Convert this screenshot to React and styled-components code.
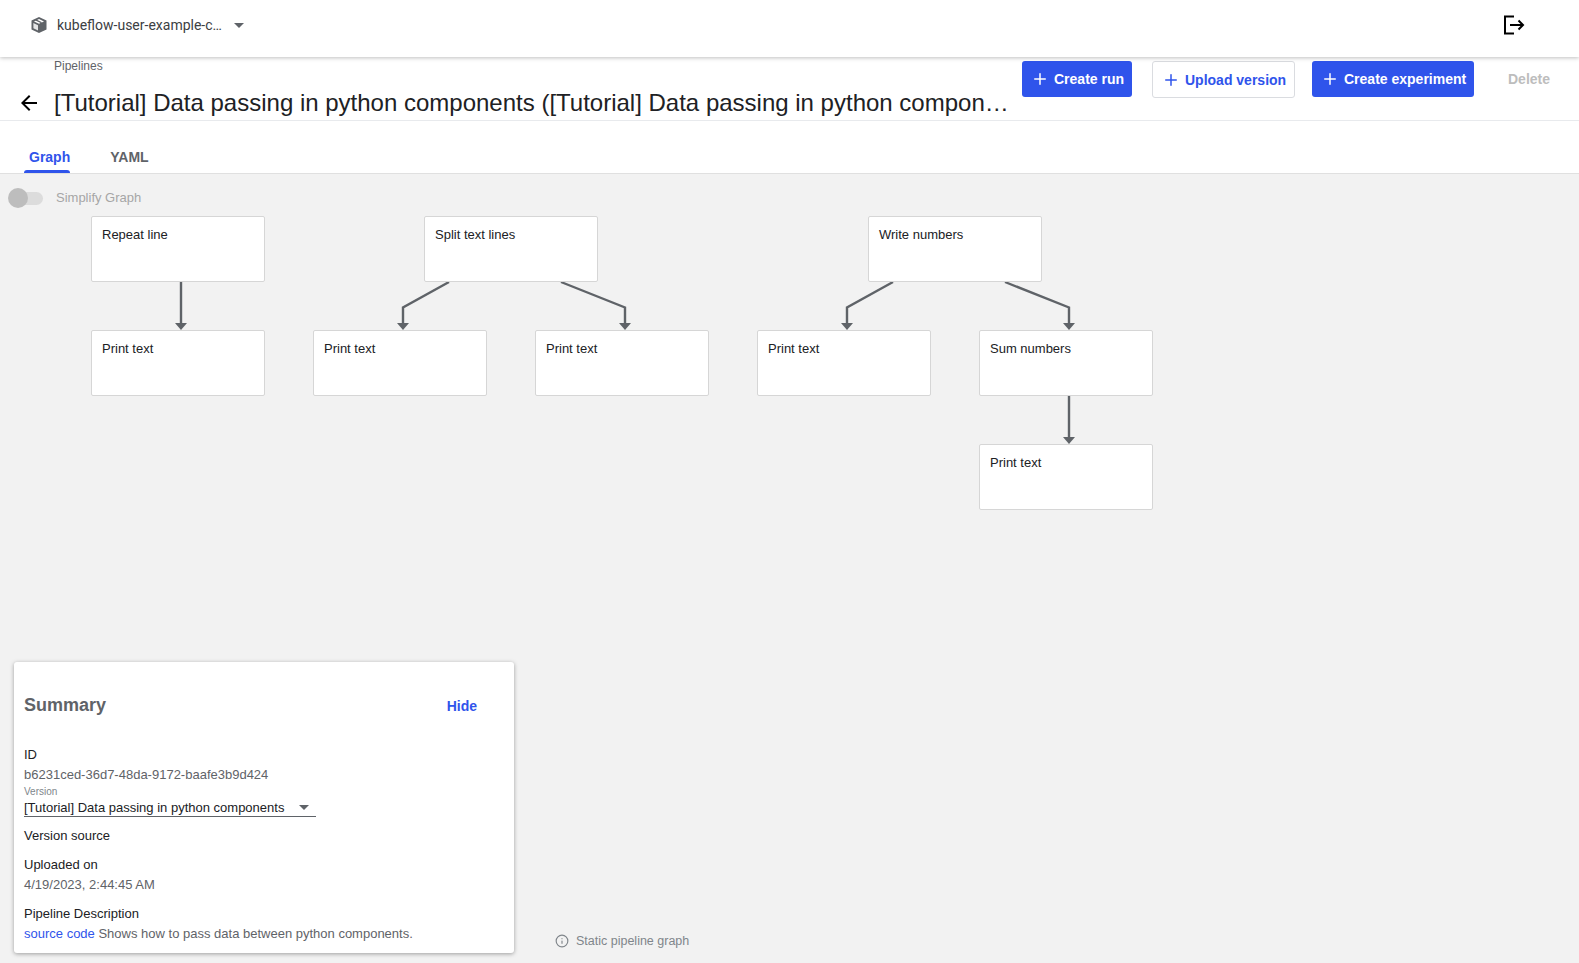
import React from 'react';
import styled, { createGlobalStyle } from 'styled-components';
import { Plus, Info } from 'lucide-react';

const GlobalStyle = createGlobalStyle`
  html, body {
    margin: 0;
    padding: 0;
    height: 100%;
    background: #fff;
    font-family: "Liberation Sans", Arial, sans-serif;
  }
  #root { height: 100%; }
  * { box-sizing: border-box; }
`;

const Page = styled.div`
  display: flex;
  flex-direction: column;
  height: 963px;
  overflow: hidden;
`;
const TopBar = styled.header`
  flex: none;
  height: 57px;
  display: flex;
  align-items: center;
  padding: 0 54px 7px 30px;
  background: #fff;
  box-shadow: 0 1px 4px rgba(0, 0, 0, 0.25);
  position: relative;
  z-index: 2;
`;
const Namespace = styled.div`
  display: flex;
  align-items: center;
  flex: 1;
  font-family: Roboto, sans-serif;
  font-size: 14px;
  color: #3c4043;
`;
const NamespaceName = styled.span`
  margin-left: 9px;
  width: 177px;
  white-space: nowrap;
`;
const Caret = styled.span`
  width: 0;
  height: 0;
  border-left: 5px solid transparent;
  border-right: 5px solid transparent;
  border-top: 5px solid #5f6368;
`;
const Toolbar = styled.div`
  flex: none;
  height: 64px;
  display: flex;
  align-items: flex-start;
  padding-left: 17px;
  border-bottom: 1px solid #e8eaed;
  background: #fff;
`;
const BackCell = styled.div`
  flex: none;
  width: 37px;
  padding-top: 34px;
  display: flex;
`;
const Heading = styled.div`
  flex: none;
  width: 967px;
  min-width: 0;
`;
const Crumb = styled.div`
  margin-top: 2px;
  font-size: 12px;
  line-height: 14px;
  color: #5f6368;
`;
const Title = styled.h1`
  margin: 15px 0 0;
  font-size: 24px;
  font-weight: 400;
  line-height: 30px;
  color: #202124;
  white-space: nowrap;
  overflow: hidden;
  text-overflow: ellipsis;
`;
const Actions = styled.div`
  display: flex;
  align-items: flex-start;
  padding: 4px 0 0 1px;
`;
const ActionButton = styled.button`
  height: ${(p) => (p.$outlined ? 37 : 36)}px;
  width: ${(p) => p.$width}px;
  margin-right: ${(p) => p.$gap}px;
  padding: 0 0 0 9px;
  display: flex;
  align-items: center;
  gap: 5px;
  border-radius: 3px;
  border: ${(p) => (p.$outlined ? '1px solid #dadce0' : '0')};
  background: ${(p) => (p.$outlined ? '#fff' : '#2f54eb')};
  color: ${(p) => (p.$outlined ? '#2f54eb' : '#fff')};
  font-family: "Liberation Sans", Arial, sans-serif;
  font-size: 14px;
  font-weight: 700;
  white-space: nowrap;
`;
const DisabledAction = styled.span`
  margin: 10px 0 0 14px;
  font-size: 14px;
  font-weight: 700;
  color: #bdbdbd;
`;
const Tabs = styled.nav`
  flex: none;
  height: 53px;
  display: flex;
  align-items: stretch;
  padding-left: 24px;
  gap: 30px;
  background: #fff;
  border-bottom: 1px solid #e0e0e0;
`;
const Tab = styled.div`
  position: relative;
  padding: 26px 0 0 ${(p) => (p.$active ? 5 : 0)}px;
  margin-left: ${(p) => (p.$active ? 0 : 10)}px;
  font-size: 14px;
  font-weight: 700;
  line-height: 20px;
  color: ${(p) => (p.$active ? '#2f54eb' : '#5f6368')};
  ${(p) =>
    p.$active &&
    `&::after {
      content: '';
      position: absolute;
      left: 0;
      right: 0;
      bottom: 0;
      height: 3px;
      background: #2f54eb;
      border-radius: 3px 3px 0 0;
    }`}
`;
const Canvas = styled.main`
  flex: 1;
  position: relative;
  background: #f2f2f2;
`;
const SimplifyRow = styled.div`
  display: flex;
  align-items: center;
  height: 20px;
  margin: 14px 0 0 8px;
`;
const Track = styled.div`
  position: relative;
  width: 34px;
  height: 13px;
  margin-left: 1px;
  border-radius: 7px;
  background: #dcdcdc;
  &::before {
    content: '';
    position: absolute;
    left: -1px;
    top: -3.5px;
    width: 20px;
    height: 20px;
    border-radius: 50%;
    background: #bdbdbd;
  }
`;
const SimplifyLabel = styled.span`
  margin: -2px 0 0 13px;
  font-size: 13px;
  color: #a6a6a6;
`;
const EdgeLayer = styled.svg`
  position: absolute;
  left: 0;
  top: 0;
  width: 1300px;
  height: 340px;
`;
const Node = styled.div`
  position: absolute;
  width: 174px;
  height: 66px;
  padding: 10px;
  background: #fff;
  border: 1px solid #d6d6d6;
  border-radius: 2px;
  font-size: 13px;
  line-height: 16px;
  color: #202124;
`;
const SummaryCard = styled.section`
  position: absolute;
  left: 14px;
  bottom: 10px;
  width: 500px;
  height: 291px;
  padding: 0 10px;
  background: #fff;
  border-radius: 3px;
  box-shadow: 0 1px 4px rgba(0, 0, 0, 0.35);
  font-size: 13px;
  color: #202124;
`;
const SummaryHead = styled.div`
  display: flex;
  justify-content: space-between;
  align-items: center;
  height: 40px;
  margin-top: 23px;
  padding-right: 27px;
`;
const SummaryTitle = styled.h2`
  margin: 0;
  font-size: 18px;
  font-weight: 700;
  color: #5f6368;
`;
const HideLink = styled.span`
  font-size: 14px;
  font-weight: 700;
  margin-top: 2px;
  color: #2f54eb;
`;
const Label = styled.div`
  height: 20px;
  line-height: 20px;
  margin-top: ${(p) => p.$top || 0}px;
`;
const Value = styled.div`
  height: 20px;
  line-height: 20px;
  color: #5f6368;
`;
const VersionLabel = styled.div`
  font-size: 10px;
  line-height: 12px;
  margin-top: 1px;
  color: #80868b;
`;
const VersionSelect = styled.div`
  display: flex;
  align-items: center;
  justify-content: space-between;
  width: 292px;
  height: 18px;
  padding-right: 7px;
  border-bottom: 1px solid #5f6368;
  margin-top: 1px;
`;
const SourceLink = styled.span`
  color: #2f54eb;
`;
const Legend = styled.div`
  position: absolute;
  left: 555px;
  bottom: 15px;
  display: flex;
  align-items: center;
  gap: 7px;
  font-size: 12.5px;
  color: #80868b;
`;

const PackageIcon = () => (
  <svg width="18" height="18" viewBox="0 0 18 18">
    <path d="M9 1 16.5 4.6v8.8L9 17l-7.5-3.6V4.6z" fill="#5f6368" />
    <path d="M9 3 14 5.4 9 7.8 4 5.4z" fill="#fff" />
    <path d="M3.4 7 8 9.2v5.2l-4.6-2.2z" fill="#e4e5e6" />
    <path d="M5.6 3.9 11 6.5v2.4" fill="none" stroke="#5f6368" strokeWidth="1.2" />
  </svg>
);

const ExitIcon = () => (
  <svg width="22" height="20" viewBox="0 0 22 20" fill="none" stroke="#000" strokeWidth="2">
    <path d="M11 1.5H2V18.5H11" />
    <path d="M7 10H20M15.5 5.5 20 10l-4.5 4.5" />
  </svg>
);

const BackIcon = () => (
  <svg width="24" height="24" viewBox="0 0 24 24" fill="#000">
    <path d="M20 11H7.83l5.59-5.59L12 4l-8 8 8 8 1.41-1.41L7.83 13H20v-2z" />
  </svg>
);

const nodes = [
  { label: 'Repeat line', x: 91, y: 42 },
  { label: 'Split text lines', x: 424, y: 42 },
  { label: 'Write numbers', x: 868, y: 42 },
  { label: 'Print text', x: 91, y: 156 },
  { label: 'Print text', x: 313, y: 156 },
  { label: 'Print text', x: 535, y: 156 },
  { label: 'Print text', x: 757, y: 156 },
  { label: 'Sum numbers', x: 979, y: 156 },
  { label: 'Print text', x: 979, y: 270 },
];

// page y minus 173, the top of the canvas
const edges = [
  { d: 'M181 108V149', tip: [181, 156] },
  { d: 'M449 108 403 133.5V149', tip: [403, 156] },
  { d: 'M561 108 625 133.5V149', tip: [625, 156] },
  { d: 'M893 108 847 133.5V149', tip: [847, 156] },
  { d: 'M1005 108 1069 133.5V149', tip: [1069, 156] },
  { d: 'M1069 222V263', tip: [1069, 270] },
];

const App = () => (
  <Page>
    <GlobalStyle />
    <TopBar>
      <Namespace>
        <PackageIcon />
        <NamespaceName>kubeflow-user-example-c…</NamespaceName>
        <Caret />
      </Namespace>
      <ExitIcon />
    </TopBar>
    <Toolbar>
      <BackCell>
        <BackIcon />
      </BackCell>
      <Heading>
        <Crumb>Pipelines</Crumb>
        <Title>
          [Tutorial] Data passing in python components ([Tutorial] Data passing in python components)
        </Title>
      </Heading>
      <Actions>
        <ActionButton $width={110} $gap={20}>
          <Plus size={18} strokeWidth={2} />
          Create run
        </ActionButton>
        <ActionButton $outlined $width={143} $gap={17}>
          <Plus size={18} strokeWidth={2} />
          Upload version
        </ActionButton>
        <ActionButton $width={162} $gap={20}>
          <Plus size={18} strokeWidth={2} />
          Create experiment
        </ActionButton>
        <DisabledAction>Delete</DisabledAction>
      </Actions>
    </Toolbar>
    <Tabs>
      <Tab $active>Graph</Tab>
      <Tab>YAML</Tab>
    </Tabs>
    <Canvas>
      <SimplifyRow>
        <Track />
        <SimplifyLabel>Simplify Graph</SimplifyLabel>
      </SimplifyRow>
      <EdgeLayer viewBox="0 0 1300 340" fill="none">
        {edges.map((e) => (
          <g key={e.d}>
            <path d={e.d} stroke="#5f6368" strokeWidth="2.4" />
            <polygon
              points={`${e.tip[0] - 6},${e.tip[1] - 7} ${e.tip[0] + 6},${e.tip[1] - 7} ${e.tip[0]},${e.tip[1]}`}
              fill="#5f6368"
            />
          </g>
        ))}
      </EdgeLayer>
      {nodes.map((n) => (
        <Node key={`${n.label}-${n.x}-${n.y}`} style={{ left: n.x, top: n.y }}>
          {n.label}
        </Node>
      ))}
      <SummaryCard>
        <SummaryHead>
          <SummaryTitle>Summary</SummaryTitle>
          <HideLink>Hide</HideLink>
        </SummaryHead>
        <Label $top={20}>ID</Label>
        <Value>b6231ced-36d7-48da-9172-baafe3b9d424</Value>
        <VersionLabel>Version</VersionLabel>
        <VersionSelect>
          [Tutorial] Data passing in python components
          <Caret />
        </VersionSelect>
        <Label $top={9}>Version source</Label>
        <Label $top={9}>Uploaded on</Label>
        <Value>4/19/2023, 2:44:45 AM</Value>
        <Label $top={9}>Pipeline Description</Label>
        <Value>
          <SourceLink>source code</SourceLink> Shows how to pass data between python components.
        </Value>
      </SummaryCard>
      <Legend>
        <Info size={14} color="#80868b" strokeWidth={2} />
        Static pipeline graph
      </Legend>
    </Canvas>
  </Page>
);

export default App;
